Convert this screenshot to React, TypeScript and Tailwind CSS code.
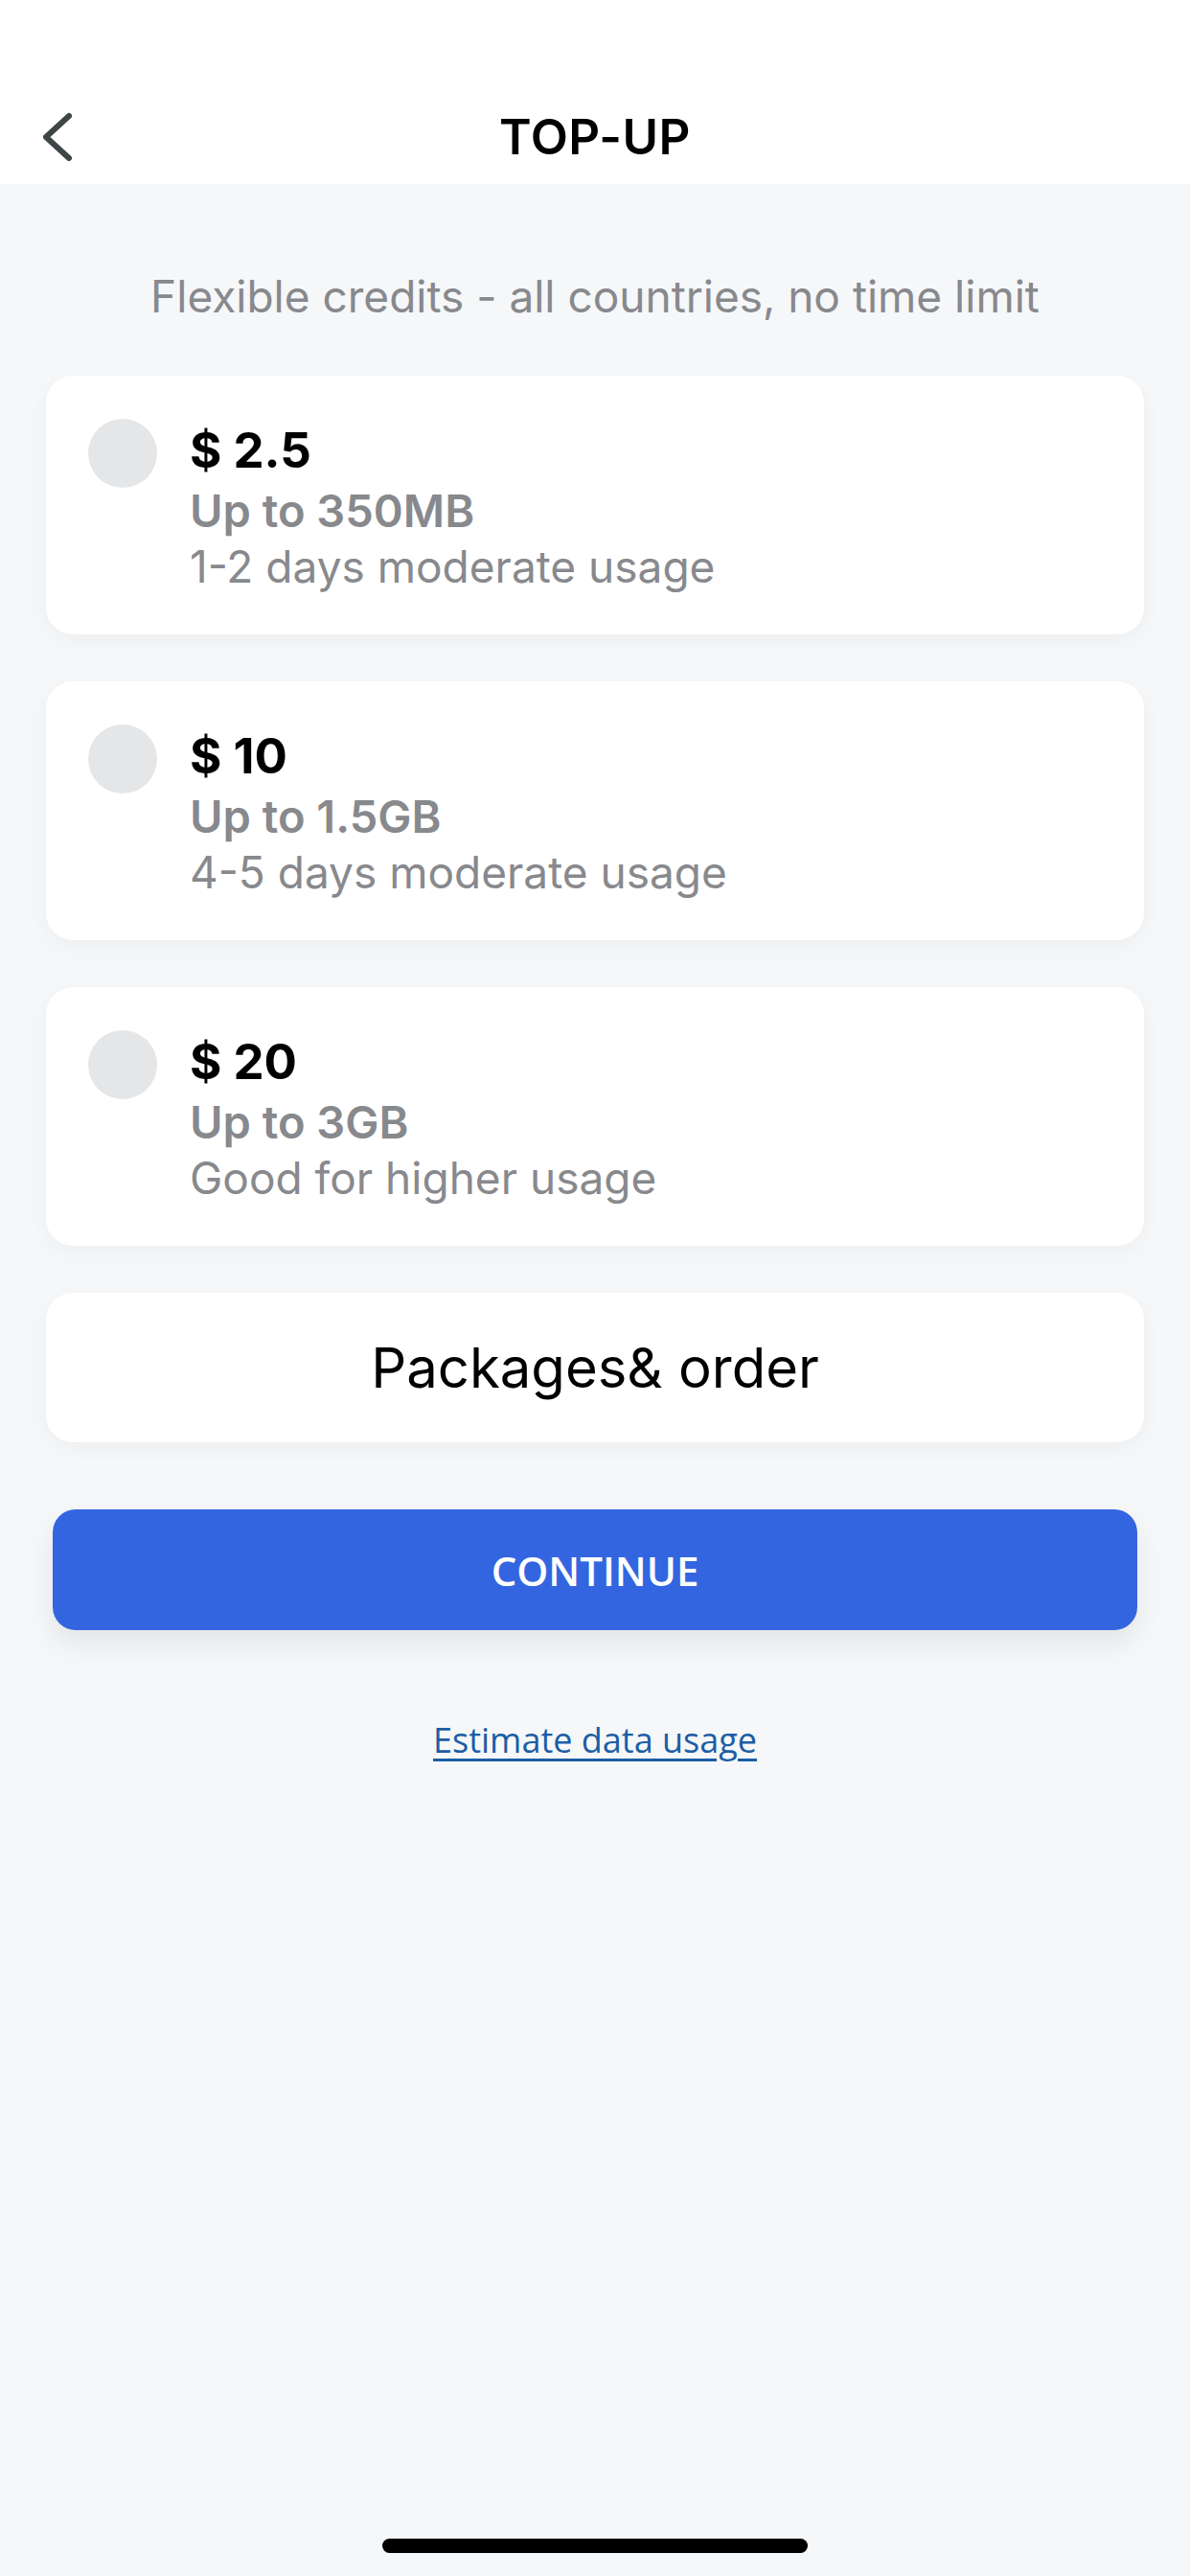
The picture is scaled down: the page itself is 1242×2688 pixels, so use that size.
const plans = [
  { price: "$ 2.5", data: "Up to 350MB", note: "1-2 days moderate usage" },
  { price: "$ 10", data: "Up to 1.5GB", note: "4-5 days moderate usage" },
  { price: "$ 20", data: "Up to 3GB", note: "Good for higher usage" },
];

const sf = { fontFamily: "Inter, 'Noto Sans', sans-serif" };

const PlanCard = ({ price, data, note }: { price: string; data: string; note: string }) => {
  return (
    <div className="h-[270px] rounded-[28px] bg-white shadow-[0_6px_24px_rgba(0,0,0,0.04)] flex pl-[44px] pt-[45px] gap-[34px]">
      <div className="w-[72px] h-[72px] rounded-full bg-[#e5e6e8] shrink-0" />
      <div className="flex flex-col -mt-[1px]">
        <span className="text-[51px] leading-[68px] font-bold text-black">{price}</span>
        <span className="text-[47px] leading-[58px] font-semibold text-[#88898d]">{data}</span>
        <span className="text-[46px] leading-[58px] font-normal text-[#88898d]">{note}</span>
      </div>
    </div>
  );
};

const App = () => {
  return (
    <div className="w-[1242px] h-[2688px] bg-[#f6f7f9] flex flex-col" style={sf}>
      <div className="h-[192px] bg-white pt-[94px] grid grid-cols-[1fr_auto_1fr] items-center px-[40px]">
        <svg width="40" height="56" viewBox="0 0 40 56" className="ml-[2px]">
          <path
            d="M30 6 L6 28 L30 50"
            fill="none"
            stroke="#3d4646"
            strokeWidth="6"
            strokeLinecap="round"
            strokeLinejoin="round"
          />
        </svg>
        <h1 className="text-[51px] font-semibold text-black tracking-[0.5px]">TOP-UP</h1>
        <div />
      </div>

      <p className="pt-[89px] text-center text-[46px] leading-[56px] text-[#88898d]">
        Flexible credits - all countries, no time limit
      </p>

      <div className="mx-[48px] mt-[55px] flex flex-col gap-[49px]">
        {plans.map((p) => (
          <PlanCard key={p.price} {...p} />
        ))}
        <div className="h-[156px] rounded-[28px] bg-white shadow-[0_6px_24px_rgba(0,0,0,0.04)] flex items-center justify-center">
          <span className="text-[58px] text-black">Packages&amp; order</span>
        </div>
      </div>

      <button
        className="mx-[55px] mt-[70px] h-[126px] rounded-[24px] bg-[#3465e1] shadow-[0_14px_30px_rgba(0,0,0,0.08)] text-white text-[42px] font-semibold"
        style={{ fontFamily: "'Open Sans', 'Noto Sans', sans-serif" }}
      >
        CONTINUE
      </button>

      <a
        href="#"
        className="mt-[88px] self-center text-[36px] text-[#1b5ea5] underline underline-offset-[6px]"
        style={{ fontFamily: "'Open Sans', 'Noto Sans', sans-serif" }}
      >
        Estimate data usage
      </a>

      <div className="mt-auto mb-[24px] self-center w-[444px] h-[15px] rounded-full bg-black" />
    </div>
  );
};

export default App;
